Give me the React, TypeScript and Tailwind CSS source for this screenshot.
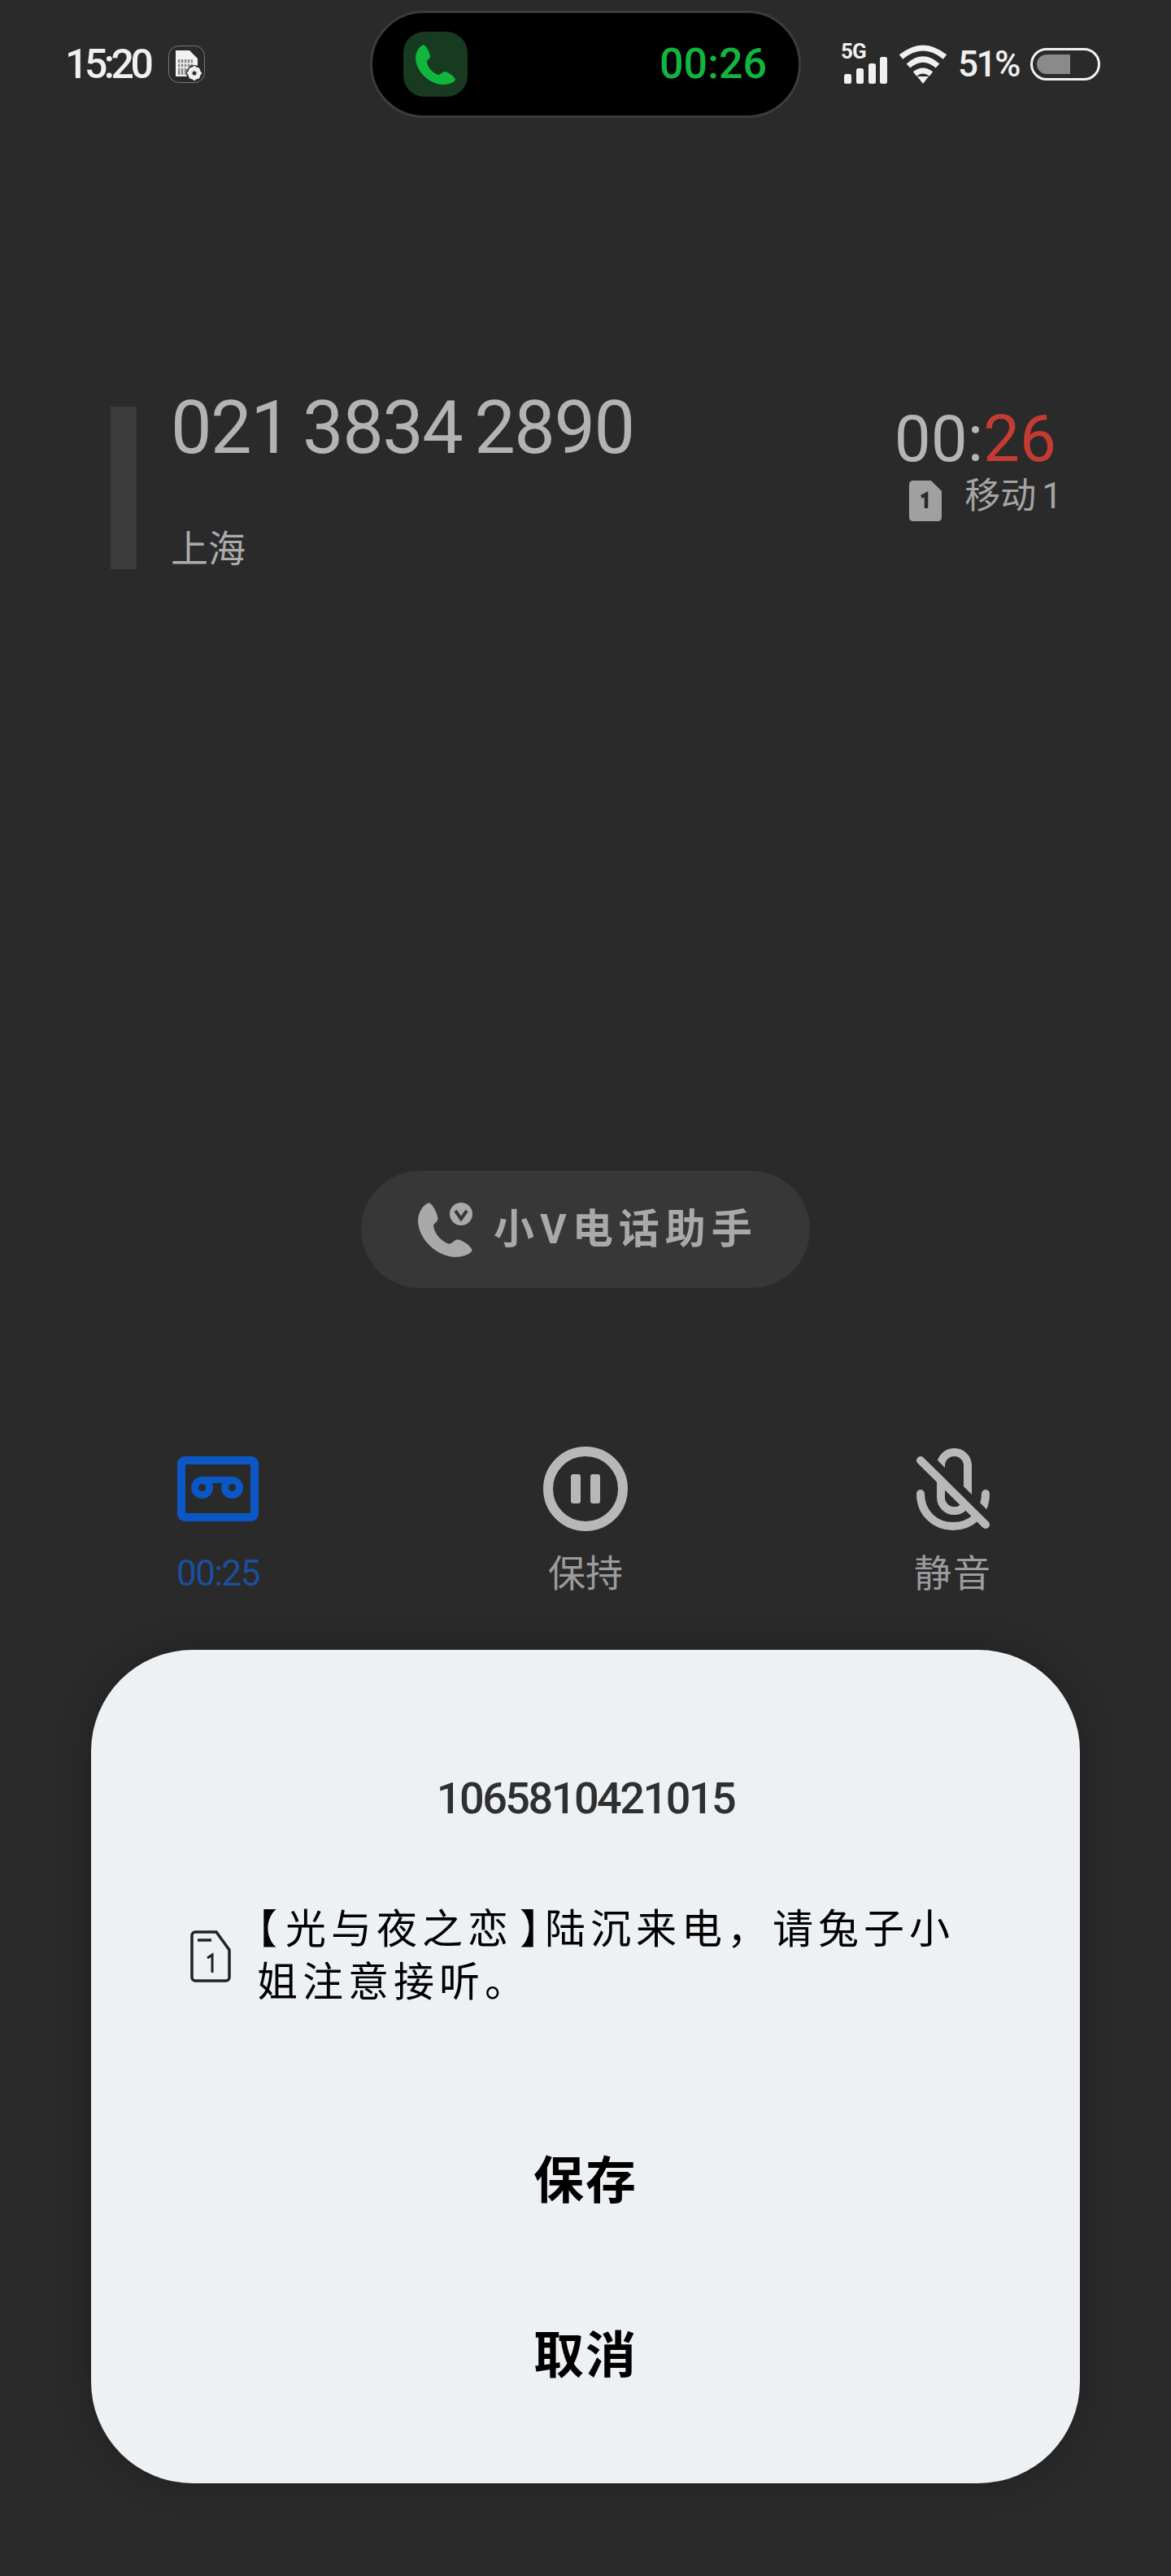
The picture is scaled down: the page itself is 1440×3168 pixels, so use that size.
import React from "react";

const PhoneShape = ({ className }: { className: string }) => (
  <svg viewBox="0 0 49 50" className={className} fill="currentColor">
    <path d="M10 1C13 2 17 9 18 15C18 18 15 19 14 21C14 28 21 36 28 38C31 38 33 34 36 34C41 35 48 40 49 44C47 48 40 50 33 50C15 49 0 32 0 17C0 10 5 2 10 1Z" />
  </svg>
);

const StatusBar = () => (
  <div className="flex items-center pt-[13px] pl-[80px] h-[145px] text-[#f0f0f0]">
    <div className="flex items-center w-[375px]">
      <span className="text-[50px] leading-[50px] font-medium tracking-[-4.5px] w-[127px]">15:20</span>
      <svg viewBox="0 0 45 46" className="w-[45px] h-[46px]">
        <rect x="0.5" y="0.5" width="44" height="45" rx="12" fill="none" stroke="#777" />
        <path d="M9 6H26L36 16V38H9Z" fill="#f2f2f2" />
        <path d="M12 17H30V36H12Z" fill="#8a8a8a" />
        <path d="M15 17V36M19 17V36M23 17V30M27 17V24M12 22H30M12 27H26" stroke="#eee" strokeWidth="1.5" />
        <circle cx="32" cy="34" r="10" fill="#2a2a2a" />
        <circle cx="32" cy="34" r="6" fill="none" stroke="#f2f2f2" strokeWidth="4" />
        <path d="M32 25V43M23 34H41M26 28L38 40M38 28L26 40" stroke="#f2f2f2" strokeWidth="2.5" />
        <circle cx="32" cy="34" r="2.5" fill="#2a2a2a" />
      </svg>
    </div>
    <div className="flex items-center justify-between w-[530px] h-[132px] bg-black border-[3px] border-[#3c3c3c] rounded-full pl-[38px] pr-[39px]">
      <div className="flex items-center justify-center w-[79px] h-[80px] rounded-[26px] bg-[#173a20]">
        <PhoneShape className="w-[49px] h-[50px] text-[#10b63e]" />
      </div>
      <span className="text-[52px] leading-[50px] font-medium text-[#12b53e]">00:26</span>
    </div>
    <div className="flex items-center ml-[49px]">
      <div className="w-[57px] h-[48px] relative">
        <span className="absolute left-0 top-[-5px] text-[26px] leading-[26px] font-bold tracking-[-1px]">5G</span>
        <svg viewBox="0 0 53 33" className="absolute top-[15px] left-[4px] w-[53px] h-[33px]" fill="#f0f0f0">
          <rect x="0" y="21" width="9" height="12" rx="2.5" />
          <rect x="15" y="14" width="9" height="19" rx="2.5" />
          <rect x="30" y="8" width="9" height="25" rx="2.5" />
          <rect x="44" y="0" width="9" height="33" rx="2.5" />
        </svg>
      </div>
      <svg viewBox="0 0 60 48" className="w-[60px] h-[48px] ml-[14px]" fill="none" stroke="#f0f0f0" strokeWidth="7">
        <path d="M3 15Q30 -7 57 15" />
        <path d="M12 26Q30 10 48 26" />
        <path d="M20 36Q30 28 40 36" />
        <path d="M23 39H37L30 48Z" fill="#f0f0f0" stroke="none" />
      </svg>
      <span className="text-[44px] leading-[44px] font-medium tracking-[-2.5px] ml-[13px] w-[72px]">51%</span>
      <div className="flex w-[86px] h-[40px] ml-[17px] p-[5px] rounded-full border-[3px] border-[#f0f0f0]">
        <div className="w-[41px] h-full bg-[#8a8a8a] rounded-l-full" />
      </div>
    </div>
  </div>
);

const CallInfo = () => (
  <div className="flex mt-[355px] pl-[136px] pr-[141px]">
    <div className="w-[32px] h-[200px] bg-[#3b3b3b]" />
    <div className="flex flex-col ml-[42px] text-[#b3b3b3]">
      <span className="text-[90px] leading-[88px] -mt-[17px] whitespace-pre tracking-[-1.5px] [word-spacing:-6px]">021 3834 2890</span>
      <span className="text-[46px] leading-[56px] mt-[76px] text-[#ababab]">上海</span>
    </div>
    <div className="flex flex-col items-end ml-auto">
      <span className="text-[80px] leading-[80px] text-[#b5b5b5]">
        00:<span className="text-[#c43b34]">26</span>
      </span>
      <div className="flex items-start mt-[9px] -mr-[7px] text-[#a4a4a4]">
        <svg viewBox="0 0 40 50" className="w-[40px] h-[50px] mt-[2px]">
          <path d="M5 0H27L40 13V45C40 48 38 50 35 50H5C2 50 0 48 0 45V5C0 2 2 0 5 0Z" fill="#a0a0a0" />
          <path d="M15 20L21 17V34" fill="none" stroke="#2a2a2a" strokeWidth="4.5" />
        </svg>
        <span className="text-[44px] leading-[42px] ml-[28px] whitespace-pre [word-spacing:-4px]">移动 1</span>
      </div>
    </div>
  </div>
);

const AssistantPill = () => (
  <div className="flex items-center self-center w-[552px] h-[144px] mt-[737px] pl-[70px] rounded-full bg-[#373737] text-[#a9a9a9]">
    <svg viewBox="0 0 68 68" className="w-[68px] h-[68px]">
      <g transform="scale(1.36)" fill="#a9a9a9">
        <path d="M10 1C13 2 17 9 18 15C18 18 15 19 14 21C14 28 21 36 28 38C31 38 33 34 36 34C41 35 48 40 49 44C47 48 40 50 33 50C15 49 0 32 0 17C0 10 5 2 10 1Z" />
      </g>
      <circle cx="53" cy="15" r="14" fill="#a9a9a9" />
      <path d="M46 11L53 21L60 11" fill="none" stroke="#373737" strokeWidth="4" />
    </svg>
    <span className="text-[50px] leading-[56px] font-bold ml-[25px] whitespace-pre tracking-[7px]">小V电话助手</span>
  </div>
);

const CallActions = () => (
  <div className="grid grid-cols-3 px-[42px] mt-[195px]">
    <div className="flex flex-col items-center">
      <svg viewBox="0 0 100 104" className="w-[100px] h-[104px]">
        <rect x="5" y="17" width="90" height="70" rx="4" fill="none" stroke="#0c57c6" strokeWidth="10" />
        <circle cx="30.5" cy="50.5" r="13.5" fill="#0c57c6" />
        <circle cx="67.5" cy="50.5" r="13.5" fill="#0c57c6" />
        <rect x="30" y="37" width="38" height="8" fill="#0c57c6" />
        <circle cx="30.5" cy="50.5" r="4.5" fill="#2a2a2a" />
        <circle cx="67.5" cy="50.5" r="4.5" fill="#2a2a2a" />
      </svg>
      <span className="text-[44px] leading-[56px] mt-[24px] text-[#1b4f9e] tracking-[-1.5px]">00:25</span>
    </div>
    <div className="flex flex-col items-center">
      <svg viewBox="0 0 104 104" className="w-[104px] h-[104px]">
        <circle cx="52" cy="52" r="46" fill="none" stroke="#b8b8b8" strokeWidth="12" />
        <rect x="34" y="34" width="12" height="36" rx="3" fill="#b8b8b8" />
        <rect x="58" y="34" width="12" height="36" rx="3" fill="#b8b8b8" />
      </svg>
      <span className="text-[46px] leading-[56px] mt-[24px] text-[#9c9c9c]">保持</span>
    </div>
    <div className="flex flex-col items-center">
      <svg viewBox="0 0 96 104" className="w-[96px] h-[104px]" fill="none">
        <rect x="33" y="7" width="33" height="72" rx="16.5" stroke="#b8b8b8" strokeWidth="10" />
        <path d="M8 58C8 82 26 98 48 98C70 98 88 82 88 58" stroke="#b8b8b8" strokeWidth="10" strokeLinecap="round" />
        <path d="M14 9L100 95" stroke="#2a2a2a" strokeWidth="10" />
        <path d="M8 17L88 96" stroke="#b8b8b8" strokeWidth="10" strokeLinecap="round" />
      </svg>
      <span className="text-[46px] leading-[56px] mt-[24px] text-[#9c9c9c] tracking-[2px]">静音</span>
    </div>
  </div>
);

const MessageCard = () => (
  <div className="flex flex-col items-center mx-[112px] mt-[66px] h-[1025px] rounded-[125px] bg-[#eef1f4] shadow-[0_0_40px_rgba(0,0,0,0.25)]">
    <span className="text-[54px] leading-[64px] mt-[151px] font-medium text-[#2f2f2f] tracking-[-2.5px]">1065810421015</span>
    <div className="flex items-center self-start mt-[97px] ml-[122px] text-black">
      <svg viewBox="0 0 50 64" className="w-[50px] h-[64px]" fill="none" stroke="#222" strokeWidth="3.5">
        <path d="M6 2H32L48 24V58C48 60 46 62 44 62H6C4 62 2 60 2 58V6C2 4 4 2 6 2Z" />
        <path d="M9 12H26" />
        <path d="M21 34L27 30V52" strokeWidth="3" />
      </svg>
      <div className="flex flex-col w-[860px] ml-[32px] text-[50px] leading-[65px] tracking-[6px] whitespace-nowrap">
        <p>
          <span className="[font-feature-settings:'halt'] mr-[4px]">【</span>光与夜之恋<span className="[font-feature-settings:'halt'] ml-[8px]">】</span>陆沉来电，请兔子小
        </p>
        <p>姐注意接听。</p>
      </div>
    </div>
    <span className="text-[62px] leading-[80px] mt-[172px] font-bold text-black tracking-[2px]">保存</span>
    <span className="text-[62px] leading-[80px] mt-[135px] font-bold text-black tracking-[2px]">取消</span>
  </div>
);

export default function App() {
  return (
    <div className="flex flex-col w-[1440px] h-[3168px] overflow-hidden bg-[#2a2a2a] font-[Roboto,'Noto_Sans_CJK_SC',sans-serif]">
      <StatusBar />
      <CallInfo />
      <AssistantPill />
      <CallActions />
      <MessageCard />
    </div>
  );
}
